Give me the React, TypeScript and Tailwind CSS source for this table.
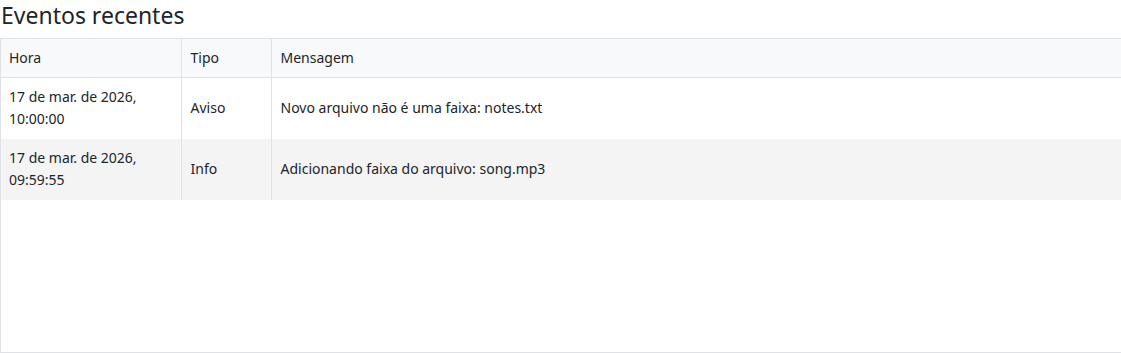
const events = [
  { hora: ['17 de mar. de 2026,', '10:00:00'], tipo: 'Aviso', msg: 'Novo arquivo não é uma faixa: notes.txt' },
  { hora: ['17 de mar. de 2026,', '09:59:55'], tipo: 'Info', msg: 'Adicionando faixa do arquivo: song.mp3' },
]

export default function App() {
  return (
    <div className="w-[1121px] h-[353px] overflow-hidden bg-white text-[#212529] font-['Noto_Sans',sans-serif]">
      <h2 className="pl-[1px] h-[38px] text-[23px] leading-[30px] text-[#212529]">Eventos recentes</h2>
      <div className="h-[315px] border-t border-l border-b border-[#dee2e6]">
        <table className="w-full border-collapse text-[14px] leading-[22px]">
          <thead>
            <tr className="bg-[#f8f9fa] border-b border-[#dee2e6]">
              <th className="w-[180px] px-2 py-2 text-left font-normal border-r border-[#dee2e6]">Hora</th>
              <th className="w-[90px] pl-[9px] pr-2 py-2 text-left font-normal border-r border-[#dee2e6]">Tipo</th>
              <th className="pl-[9px] pr-2 py-2 text-left font-normal">Mensagem</th>
            </tr>
          </thead>
          <tbody>
            {events.map((e, i) => (
              <tr key={i} className={i % 2 === 1 ? 'h-[61px] bg-[#f4f4f4]' : 'h-[61px] bg-white'}>
                <td className="px-2 py-2 border-r border-[#dee2e6]">
                  {e.hora[0]}
                  <br />
                  {e.hora[1]}
                </td>
                <td className="pl-[9px] pr-2 py-2 border-r border-[#dee2e6]">{e.tipo}</td>
                <td className="pl-[9px] pr-2 py-2">{e.msg}</td>
              </tr>
            ))}
          </tbody>
        </table>
      </div>
    </div>
  )
}
